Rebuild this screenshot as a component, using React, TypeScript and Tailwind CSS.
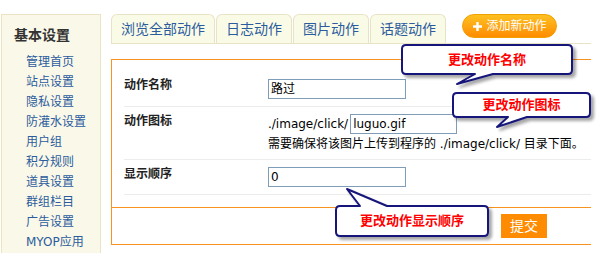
const font = "font-['DejaVu_Sans','Noto_Sans_CJK_SC',sans-serif]";

const links = [
  "管理首页",
  "站点设置",
  "隐私设置",
  "防灌水设置",
  "用户组",
  "积分规则",
  "道具设置",
  "群组栏目",
  "广告设置",
  "MYOP应用",
];

const tabs = ["浏览全部动作", "日志动作", "图片动作", "话题动作"];

const Sidebar = () => (
  <div className="ml-[1px] h-[250px] w-[100px] shrink-0 border border-[#ebe3c3] bg-[#faf8e8] pl-[12px] pt-[10px]">
    <div className="text-[14px] font-bold leading-[20px] text-[#333]">基本设置</div>
    <ul className="mt-[7px] pl-[12px]">
      {links.map((l) => (
        <li key={l} className="text-[12px] leading-[20px] text-[#2b5c9e]">
          {l}
        </li>
      ))}
    </ul>
  </div>
);

const Tabs = () => (
  <div className="flex h-[30px] items-start border-b border-[#e8e3c6]">
    <div className="flex gap-[1px]">
      {tabs.map((t) => (
        <div
          key={t}
          className="flex h-[29px] items-center rounded-t-[6px] border border-b-0 border-[#e8e3c6] bg-[#fafbe6] px-[9px] text-[14px] text-[#2b5c9e]"
        >
          {t}
        </div>
      ))}
    </div>
    <div className="ml-[16px] flex h-[24px] w-[95px] items-center justify-center gap-[3px] rounded-full border border-[#f0a000] bg-gradient-to-b from-[#ffc020] to-[#ff8c00] text-[12px] text-white">
      <svg width="11" height="11" viewBox="0 0 11 11">
        <path d="M5.5 1 V10 M1 5.5 H10" stroke="#fff" strokeWidth="2.4" />
      </svg>
      <span>添加新动作</span>
    </div>
  </div>
);

const Input = ({ value, w }: { value: string; w: string }) => (
  <div
    className={`flex h-[20px] items-center border border-[#7f9db9] bg-white pl-[2px] text-[12px] text-black ${w}`}
  >
    {value}
  </div>
);

const Label = ({ children }: { children: React.ReactNode }) => (
  <div className="mt-[1px] w-[144px] shrink-0 text-[12px] font-bold leading-[13px] text-[#222]">
    {children}
  </div>
);

const Form = () => (
  <div className="mt-[15px] border-b border-l border-t border-[#f7931e]">
    <div className="border-b border-[#f7931e] pb-[12px] pl-[12px]">
      <div className="flex border-b border-[#ececec] pb-[7px] pt-[19px]">
        <div className="w-[144px] shrink-0 text-[12px] font-bold leading-[13px] text-[#222]">
          动作名称
        </div>
        <Input value="路过" w="w-[138px]" />
      </div>
      <div className="flex border-b border-[#ececec] pb-[5px] pt-[7px]">
        <Label>动作图标</Label>
        <div className="text-[12px] text-black">
          <div className="flex h-[20px] items-center">
            <span className="mr-[2px]">./image/click/</span>
            <Input value="luguo.gif" w="w-[107px]" />
          </div>
          <div className="leading-[20px]">
            需要确保将该图片上传到程序的 ./image/click/ 目录下面。
          </div>
        </div>
      </div>
      <div className="flex border-b border-[#ececec] pb-[7px] pt-[7px]">
        <Label>显示顺序</Label>
        <Input value="0" w="w-[138px]" />
      </div>
    </div>
    <div className="h-[36px] pl-[389px] pt-[6px]">
      <div className="flex h-[24px] w-[46px] items-center justify-center bg-[#ff8c00] text-[14px] text-white">
        提交
      </div>
    </div>
  </div>
);

// speech bubbles drawn over the form
const bubbles = [
  {
    d: "M406,45 H568 Q572,45 572,49 V70 Q572,74 568,74 H493 L457,84 L475,74 H406 Q402,74 402,70 V49 Q402,45 406,45 Z",
    text: "更改动作名称",
    box: "left-[402px] top-[45px] w-[170px] h-[29px]",
  },
  {
    d: "M457,93 H586 Q590,93 590,97 V113 Q590,117 586,117 H527 L497,127 L508,117 H457 Q453,117 453,113 V97 Q453,93 457,93 Z",
    text: "更改动作图标",
    box: "left-[453px] top-[93px] w-[137px] h-[24px]",
  },
  {
    d: "M340,206 H360 L347,189 L387,206 H484 Q488,206 488,210 V232 Q488,236 484,236 H340 Q336,236 336,232 V210 Q336,206 340,206 Z",
    text: "更改动作显示顺序",
    box: "left-[336px] top-[206px] w-[152px] h-[30px]",
  },
];

const Bubbles = () => (
  <>
    <svg className="pointer-events-none absolute inset-0" width="600" height="253">
      <defs>
        <filter id="sh" x="-10%" y="-20%" width="130%" height="160%">
          <feDropShadow dx="3" dy="3" stdDeviation="1.5" floodColor="#000" floodOpacity="0.35" />
        </filter>
      </defs>
      {bubbles.map((b) => (
        <path
          key={b.text}
          d={b.d}
          fill="#fff"
          stroke="#16167a"
          strokeWidth="2"
          strokeLinejoin="round"
          filter="url(#sh)"
        />
      ))}
    </svg>
    {bubbles.map((b) => (
      <div
        key={b.text}
        className={`absolute flex items-center justify-center text-[13px] font-bold text-[#ff0000] ${b.box}`}
      >
        {b.text}
      </div>
    ))}
  </>
);

export default function App() {
  return (
    <div className={`relative h-[253px] w-[600px] overflow-hidden bg-white ${font}`}>
      <div className="flex pt-[14px]">
        <Sidebar />
        <div className="ml-[10px] w-[480px]">
          <Tabs />
          <Form />
        </div>
      </div>
      <Bubbles />
    </div>
  );
}
